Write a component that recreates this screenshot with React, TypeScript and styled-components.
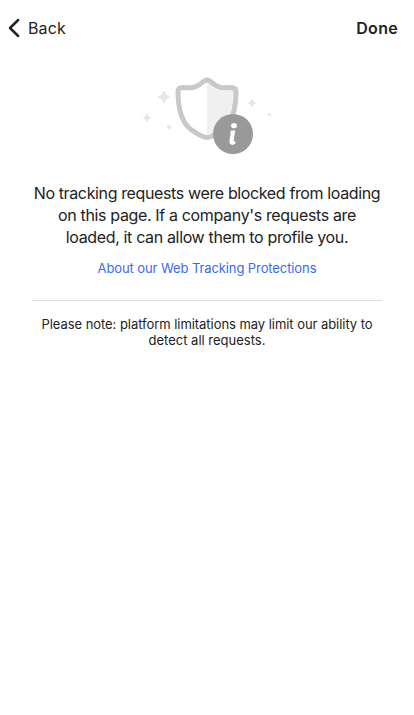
import React from 'react';
import styled, { createGlobalStyle } from 'styled-components';

const GlobalStyle = createGlobalStyle`
  *, *::before, *::after { box-sizing: border-box; }
  body {
    margin: 0;
    background: #fff;
    color: #222;
    font-family: Inter, "Liberation Sans", sans-serif;
  }
`;

const Page = styled.main`
  display: flex;
  flex-direction: column;
  min-height: 715px;
  background: #fff;
`;

const TopBar = styled.header`
  display: flex;
  align-items: center;
  justify-content: space-between;
  height: 56px;
  padding: 0 16px 0 8px;
`;

const BarButton = styled.button<{ $strong?: boolean }>`
  display: flex;
  align-items: center;
  gap: 8px;
  padding: 0;
  border: 0;
  background: none;
  color: #222;
  font-family: inherit;
  font-size: 16px;
  line-height: 20px;
  font-weight: ${(p) => (p.$strong ? 600 : 400)};
  letter-spacing: ${(p) => (p.$strong ? '0.3px' : '0.1px')};
`;

const Hero = styled.div`
  display: flex;
  height: 126px;
  padding: 9px 0 0 132px;

  svg { flex: none; }
`;

const Content = styled.section`
  display: flex;
  flex-direction: column;
  margin: 0 32px;
  text-align: center;
`;

const Summary = styled.p`
  margin: 0 -8px;
  font-size: 16px;
  line-height: 22px;
`;

const Line = styled.span<{ $tracking: number }>`
  display: block;
  white-space: nowrap;
  letter-spacing: ${(p) => p.$tracking}px;
`;

const AboutLink = styled.a`
  align-self: center;
  margin-top: 12px;
  color: #3969ef;
  font-size: 13px;
  line-height: 16px;
  text-decoration: none;
`;

const Divider = styled.hr`
  width: 100%;
  height: 1px;
  margin: 24px 0 15px;
  border: 0;
  background: #dedede;
`;

const Note = styled.p`
  margin: 0;
  font-size: 13px;
  line-height: 16px;
`;

const BackIcon = () => (
  <svg width="12" height="20" viewBox="0 0 12 20" fill="none" aria-hidden="true">
    <path d="M10.2 2 L2 10 L10.2 18" stroke="#222" strokeWidth="2.5" strokeLinecap="round" strokeLinejoin="round" />
  </svg>
);

const ShieldInfo = () => (
  <svg width="150" height="100" viewBox="0 0 150 100" fill="none" aria-hidden="true">
    <path
      d="M75 15 C70.5 15 67.5 22.8 58 22.8 C54.5 22.8 52.5 22.3 49.5 22.8 C47 23.2 46 24.6 46 27 C46 37 47 48 52.5 57.5 C57.5 66 67 72.3 75 72.3 Z"
      fill="#fff"
    />
    <path
      d="M75 15 C79.5 15 82.5 22.8 92 22.8 C95.5 22.8 97.5 22.3 100.5 22.8 C103 23.2 104 24.6 104 27 C104 37 103 48 97.5 57.5 C92.5 66 83 72.3 75 72.3 Z"
      fill="#f0f0f0"
    />
    <path
      d="M75 15 C70.5 15 67.5 22.8 58 22.8 C54.5 22.8 52.5 22.3 49.5 22.8 C47 23.2 46 24.6 46 27 C46 37 47 48 52.5 57.5 C57.5 65.5 65 69 72 72 Q75 73.2 78 72 C85 69 92.5 65.5 97.5 57.5 C103 48 104 37 104 27 C104 24.6 103 23.2 100.5 22.8 C97.5 22.3 95.5 22.8 92 22.8 C82.5 22.8 79.5 15 75 15 Z"
      stroke="#c8c8c8"
      strokeWidth="5"
      strokeLinejoin="round"
    />
    <g fill="#e6e6e6">
      <path d="M32 26 Q32.8 26 33.1 27.2 Q34 30.2 36.8 30.9 Q38 31.2 38 32 Q38 32.8 36.8 33.1 Q34 33.8 33.1 36.8 Q32.8 38 32 38 Q31.2 38 30.9 36.8 Q30 33.8 27.2 33.1 Q26 32.8 26 32 Q26 31.2 27.2 30.9 Q30 30.2 30.9 27.2 Q31.2 26 32 26 Z" />
      <path d="M15 49 Q15.6 49 15.8 50 Q16.3 51.8 18 52.2 Q19 52.4 19 53 Q19 53.6 18 53.8 Q16.3 54.2 15.8 56 Q15.6 57 15 57 Q14.4 57 14.2 56 Q13.7 54.2 12 53.8 Q11 53.6 11 53 Q11 52.4 12 52.2 Q13.7 51.8 14.2 50 Q14.4 49 15 49 Z" />
      <path d="M120 34 Q120.6 34 120.8 35 Q121.3 36.8 123 37.2 Q124 37.4 124 38 Q124 38.6 123 38.8 Q121.3 39.2 120.8 41 Q120.6 42 120 42 Q119.4 42 119.2 41 Q118.7 39.2 117 38.8 Q116 38.6 116 38 Q116 37.4 117 37.2 Q118.7 36.8 119.2 35 Q119.4 34 120 34 Z" />
      <circle cx="37" cy="62" r="2" />
      <circle cx="137.4" cy="49.5" r="1.6" />
    </g>
    <circle cx="101" cy="69" r="20" fill="#999" />
    <ellipse cx="102" cy="60.7" rx="2.9" ry="2.6" fill="#fff" />
    <path
      d="M98.4 66.1 Q101 65.2 103.3 65.4 L101.7 75 Q101.5 77 103.9 76.6 Q104 78.6 102 79.5 Q97.3 80.7 97.4 76.3 L98.6 68.5 Z"
      fill="#fff"
    />
  </svg>
);

export default function App() {
  return (
    <>
      <GlobalStyle />
      <Page>
        <TopBar>
          <BarButton><BackIcon />Back</BarButton>
          <BarButton $strong>Done</BarButton>
        </TopBar>
        <Hero><ShieldInfo /></Hero>
        <Content>
          <Summary>
            <Line $tracking={-0.37}>No tracking requests were blocked from loading</Line>
            <Line $tracking={-0.35}>on this page. If a company's requests are</Line>
            <Line $tracking={-0.35}>loaded, it can allow them to profile you.</Line>
          </Summary>
          <AboutLink>
            <Line $tracking={-0.1}>About our Web Tracking Protections</Line>
          </AboutLink>
          <Divider />
          <Note>
            <Line $tracking={-0.05}>Please note: platform limitations may limit our ability to</Line>
            <Line $tracking={0}>detect all requests.</Line>
          </Note>
        </Content>
      </Page>
    </>
  );
}
